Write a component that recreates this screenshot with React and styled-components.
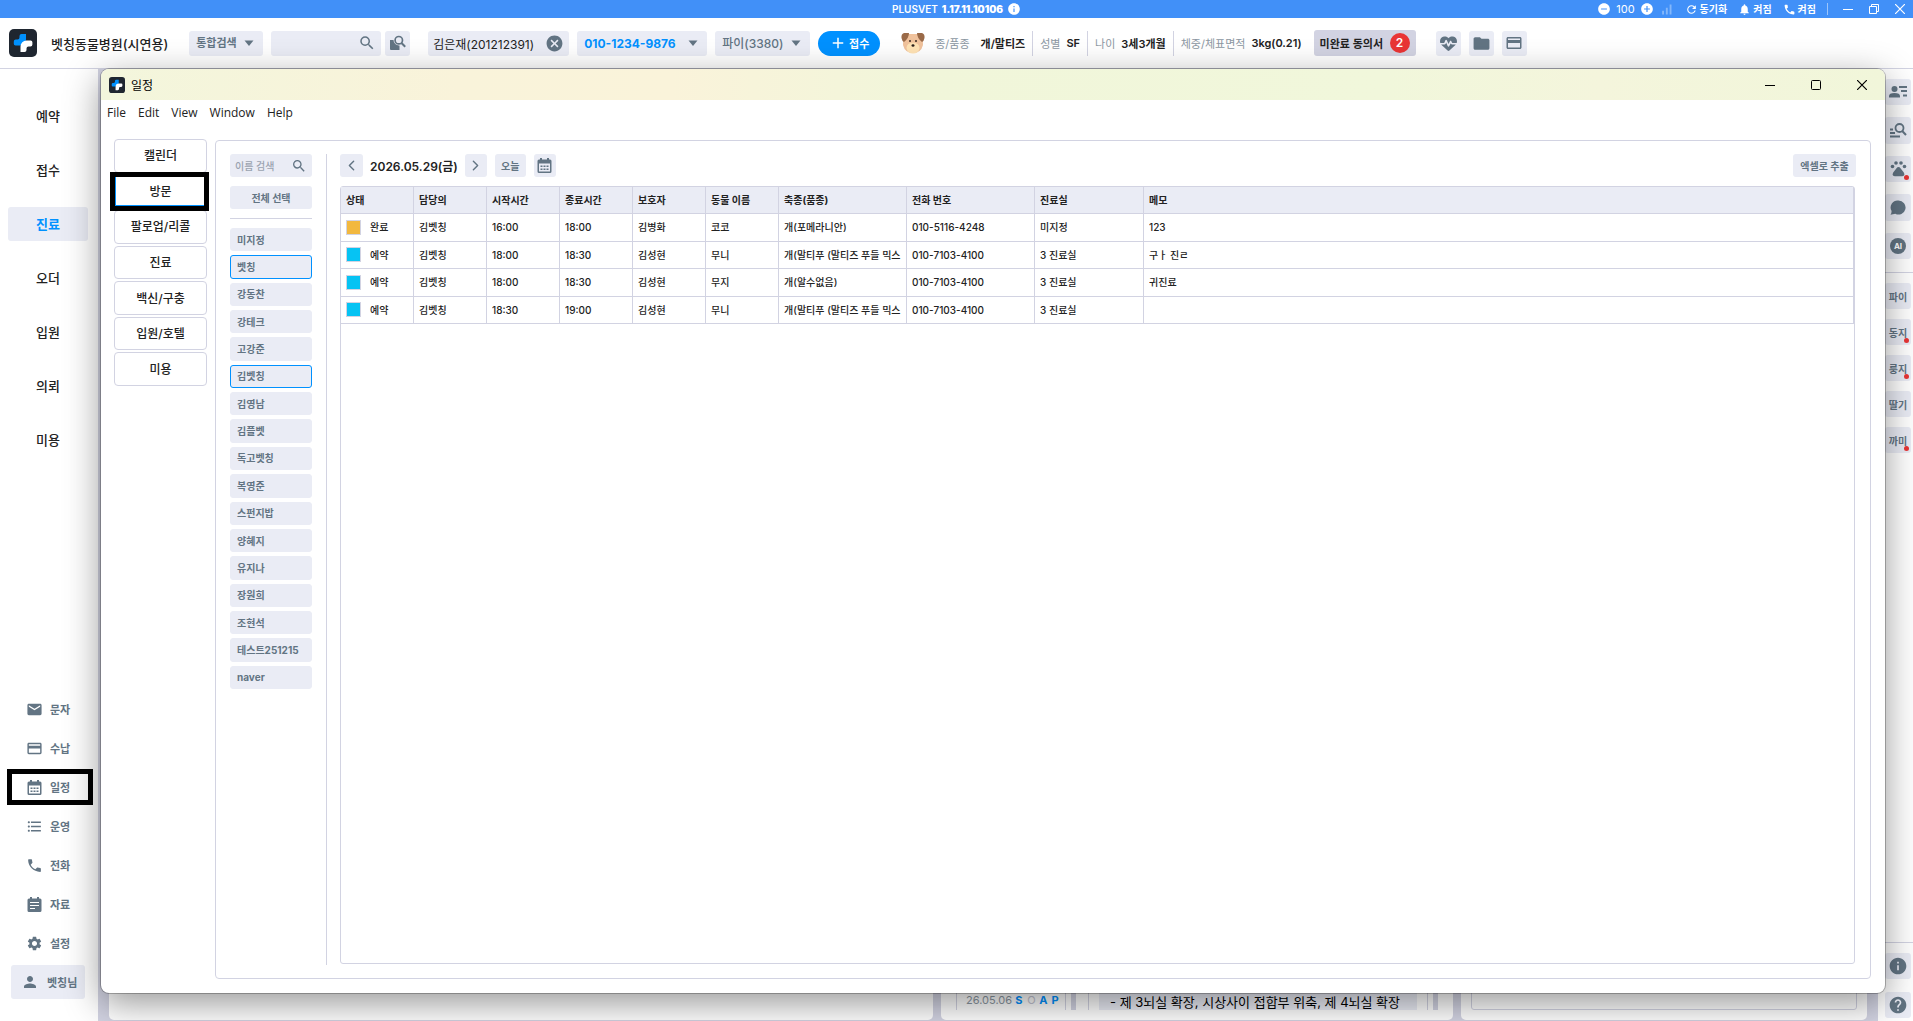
import { useState } from 'react'
import styled, { createGlobalStyle } from 'styled-components'
import {
  MdAdd, MdAddCircle, MdCancel, MdCreditCard, MdEmail, MdFolder, MdFormatListBulleted,
  MdHelp, MdInfo, MdNotifications, MdPerson, MdPhone, MdRefresh, MdRemoveCircle,
  MdSearch, MdSettings, MdSignalCellularAlt,
} from 'react-icons/md'
import { FaHeartPulse } from 'react-icons/fa6'
import { ChevronLeft, ChevronRight } from 'lucide-react'

const Calendar = () => (
  <svg width="17" height="17" viewBox="0 0 17 17" aria-hidden="true">
    <path d="M4 1h2v1.500h5V1h2v1.500h1a1.500 1.500 0 0 1 1.500 1.500v10.500A1.500 1.500 0 0 1 14 16H3a1.500 1.500 0 0 1-1.500-1.500V4A1.500 1.500 0 0 1 3 2.500h1zM3 6.500v8h11v-8z" fill="#627483" fillRule="evenodd" />
    <path d="M4.500 8.500h2v1.500h-2zM7.500 8.500h2v1.500h-2zM10.500 8.500h2v1.500h-2zM4.500 11.500h2V13h-2zM7.500 11.500h2V13h-2zM10.500 11.500h2V13h-2z" fill="#627483" />
  </svg>
)

const NotePad = () => (
  <svg width="17" height="17" viewBox="0 0 17 17" aria-hidden="true">
    <path d="M4 1h2v1.500h5V1h2v1.500h1a1.500 1.500 0 0 1 1.500 1.500v10.500A1.500 1.500 0 0 1 14 16H3a1.500 1.500 0 0 1-1.500-1.500V4A1.500 1.500 0 0 1 3 2.500h1z" fill="#627483" />
    <path d="M4 6.500h9M4 9.500h9M4 12.500h5" stroke="#fff" strokeWidth="1.200" />
  </svg>
)

const Paw = () => (
  <svg width="17" height="16" viewBox="0 0 17 16" fill="#627483" aria-hidden="true">
    <circle cx="2.500" cy="5.500" r="1.800" />
    <circle cx="6" cy="2" r="1.800" />
    <circle cx="11" cy="2" r="1.800" />
    <circle cx="14.500" cy="5.500" r="1.800" />
    <path d="M8.500 6q1.200 0 2 1.200l3.300 4.300q1.200 1.800.200 3-.600.800-2 .800H5q-1.400 0-2-.800-1-1.200.200-3l3.300-4.300Q7.300 6 8.500 6z" />
  </svg>
)

const mainMenu = ['예약', '접수', '진료', '오더', '입원', '의뢰', '미용']

const subMenu = [
  { label: '문자', icon: MdEmail },
  { label: '수납', icon: MdCreditCard },
  { label: '일정', icon: Calendar, marked: true },
  { label: '운영', icon: MdFormatListBulleted },
  { label: '전화', icon: MdPhone },
  { label: '자료', icon: NotePad },
  { label: '설정', icon: MdSettings },
]

const tabs = ['캘린더', '방문', '팔로업/리콜', '진료', '백신/구충', '입원/호텔', '미용']

const staff = [
  '미지정', '벳칭', '강동찬', '강테크', '고강준', '김벳칭', '김영남', '김플벳', '독고벳칭',
  '복영준', '스펀지밥', '양혜지', '유지나', '장원희', '조현석', '테스트251215', 'naver',
]

const columns = ['상태', '담당의', '시작시간', '종료시간', '보호자', '동물 이름', '축종(품종)', '전화 번호', '진료실', '메모']

const rows = [
  ['완료', '김벳칭', '16:00', '18:00', '김병화', '코코', '개(포메라니안)', '010-5116-4248', '미지정', '123'],
  ['예약', '김벳칭', '18:00', '18:30', '김성현', '무니', '개(말티푸 (말티즈 푸들 믹스', '010-7103-4100', '3 진료실', '구ㅏ 진ㄹ'],
  ['예약', '김벳칭', '18:00', '18:30', '김성현', '무지', '개(알수없음)', '010-7103-4100', '3 진료실', '귀진료'],
  ['예약', '김벳칭', '18:30', '19:00', '김성현', '무니', '개(말티푸 (말티즈 푸들 믹스', '010-7103-4100', '3 진료실', ''],
]

const pets = [
  { name: '파이' },
  { name: '동지', dot: true },
  { name: '룽지', dot: true },
  { name: '딸기' },
  { name: '까미', dot: true },
]

const Logo = ({ size }) => (
  <svg width={size} height={size} viewBox="0 0 28 28" aria-hidden="true">
    <rect width="28" height="28" rx="5" fill="#1f2630" />
    <path d="M10.500 7a2 2 0 0 1 2-2H17v5.500a6 6 0 0 1-6 6H6.500a1.700 1.700 0 0 1-1.700-1.700v-2.300a2 2 0 0 1 2-2h1.700a2 2 0 0 0 2-2z" fill="#0091ff" />
    <path d="M17.500 21a2 2 0 0 1-2 2H11.500v-5.500a6 6 0 0 1 6-6h4.200a1.700 1.700 0 0 1 1.700 1.700v2.300a2 2 0 0 1-2 2h-1.900a2 2 0 0 0-2 2z" fill="#fff" />
  </svg>
)

const Dog = () => (
  <svg width="24" height="22" viewBox="0 0 24 22" aria-hidden="true">
    <path d="M5 2h14q3 4 3 11-2 8-10 8T2 13Q2 6 5 2z" fill="#f0c29c" />
    <ellipse cx="12" cy="16" rx="6.500" ry="5.500" fill="#ffe3b5" />
    <path d="M3 1h5q0 5-5 9-2-1-2.500-4Q0 2 3 1zM21 1h-5q0 5 5 9 2-1 2.500-4Q24 2 21 1z" fill="#9a6a48" />
    <circle cx="9" cy="9" r="1" fill="#3b2b23" />
    <circle cx="15" cy="9" r="1" fill="#3b2b23" />
    <ellipse cx="12" cy="13.500" rx="1.500" ry="1.200" fill="#2c211c" />
  </svg>
)

const DocSearch = () => (
  <svg width="17" height="16" viewBox="0 0 17 16" aria-hidden="true">
    <path d="M1 5h3.500a5.500 5.500 0 0 0 6 5.500V15H2a1 1 0 0 1-1-1z" fill="#627483" />
    <circle cx="9.800" cy="5.200" r="3.700" fill="none" stroke="#627483" strokeWidth="1.700" />
    <path d="M12.500 8l3.700 3.800" stroke="#627483" strokeWidth="2" />
  </svg>
)

const PersonList = () => (
  <svg width="20" height="14" viewBox="0 0 20 14" fill="#627483" aria-hidden="true">
    <circle cx="6.500" cy="4" r="3" />
    <path d="M1 12.500V11q0-3 5.500-3T12 11v1.500zM11 1h8v2h-8zM13 5h6v2h-6zM15 9.500h4v2h-4z" />
  </svg>
)

const ListSearch = () => (
  <svg width="18" height="15" viewBox="0 0 18 15" aria-hidden="true">
    <path d="M1 5.500h3v2H1zM1 9h5v2H1zM1 12.500h10v2H1z" fill="#627483" />
    <circle cx="10.500" cy="5" r="4" fill="none" stroke="#627483" strokeWidth="1.800" />
    <path d="M13.200 8l3.800 4" stroke="#627483" strokeWidth="2" />
  </svg>
)

const Bubble = () => (
  <svg width="16" height="15" viewBox="0 0 16 15" aria-hidden="true">
    <path d="M8.500 0.500a7 7 0 1 1-3.200 13.200L0.500 14.800q1.300-2 1-4A7 7 0 0 1 8.500.5z" fill="#627483" />
  </svg>
)

const Caret = () => (
  <svg width="10" height="7" viewBox="0 0 10 7" aria-hidden="true">
    <path d="M.5.500h9L5 6z" fill="#627483" />
  </svg>
)

const WinMin = () => <svg width="10" height="10" aria-hidden="true"><path d="M0 5.500h10" stroke="currentColor" /></svg>
const WinMax = () => <svg width="10" height="10" aria-hidden="true"><rect x=".5" y=".5" width="9" height="9" rx="1" fill="none" stroke="currentColor" /></svg>
const WinClose = () => <svg width="10" height="10" aria-hidden="true"><path d="M0 0l10 10M10 0L0 10" stroke="currentColor" strokeWidth="1.200" /></svg>
const WinRestore = () => (
  <svg width="10" height="10" aria-hidden="true">
    <path d="M.5 2.500h7v7h-7zM2.500 2.500v-2h7v7h-2" fill="none" stroke="currentColor" />
  </svg>
)

const App = () => {
  const [tab, setTab] = useState('방문')
  const [picked, setPicked] = useState(['벳칭', '김벳칭'])

  const toggle = (name) => {
    setPicked(picked.includes(name) ? picked.filter((n) => n !== name) : [...picked, name])
  }

  return (
    <>
      <GlobalStyle />
      <Page>
        <TitleBar>
          <AppTitle>PLUSVET <b>1.17.11.10106</b><MdInfo size={14} /></AppTitle>
          <TitleTools>
            <BarButton aria-label="축소"><MdRemoveCircle size={14} /></BarButton>
            <Zoom>100</Zoom>
            <BarButton aria-label="확대"><MdAddCircle size={14} /></BarButton>
            <Signal size={15} />
            <BarButton $wide><MdRefresh size={13} />동기화</BarButton>
            <BarButton $wide><MdNotifications size={13} />켜짐</BarButton>
            <BarButton $wide><MdPhone size={13} />켜짐</BarButton>
            <BarLine />
            <BarWindow aria-label="최소화"><WinMin /></BarWindow>
            <BarWindow aria-label="이전 크기"><WinRestore /></BarWindow>
            <BarWindow aria-label="닫기"><WinClose /></BarWindow>
          </TitleTools>
        </TitleBar>

        <Header>
          <Logo size={28} />
          <Hospital>벳칭동물병원(시연용)</Hospital>
          <Pick $width={74} $size={11} $bold>
            <select aria-label="검색 구분"><option>통합검색</option></select>
            <Caret />
          </Pick>
          <SearchBox>
            <input aria-label="통합 검색" />
            <MdSearch size={18} />
          </SearchBox>
          <IconButton aria-label="상세 검색" $tight><DocSearch /></IconButton>
          <Client>김은재(201212391)<button aria-label="지우기"><MdCancel size={19} /></button></Client>
          <Pick $width={130} $size={12} $bold $blue>
            <select aria-label="전화 번호"><option>010-1234-9876</option></select>
            <Caret />
          </Pick>
          <Pick $width={95} $size={12}>
            <select aria-label="동물"><option>파이(3380)</option></select>
            <Caret />
          </Pick>
          <Receive><MdAdd size={18} />접수</Receive>
          <PetInfo>
            <Dog />
            <Fact $first><dt>종/품종</dt><dd>개/말티즈</dd></Fact>
            <Fact><dt>성별</dt><dd>SF</dd></Fact>
            <Fact><dt>나이</dt><dd>3세3개월</dd></Fact>
            <Fact $last><dt>체중/체표면적</dt><dd>3kg(0.21)</dd></Fact>
          </PetInfo>
          <Consent>미완료 동의서<span>2</span></Consent>
          <HeaderIcons>
            <IconButton aria-label="건강"><FaHeartPulse size={17} /></IconButton>
            <IconButton aria-label="폴더"><MdFolder size={19} /></IconButton>
            <IconButton aria-label="결제"><MdCreditCard size={18} /></IconButton>
          </HeaderIcons>
        </Header>

        <Body>
          <Side>
            <MainMenu>
              {mainMenu.map((m) => <MainItem key={m} href="#" $on={m === '진료'}>{m}</MainItem>)}
            </MainMenu>
            <SubMenu>
              {subMenu.map(({ label, icon: Icon, marked }) => (
                <SubItem key={label} href="#" $marked={marked}><Icon size={17} />{label}</SubItem>
              ))}
            </SubMenu>
            <User><MdPerson size={18} />벳칭님</User>
          </Side>

          <Work>
            <Card />
            <Card>
              <Dates>26.05.06 <b>S</b> <i>O</i> <b>A</b> <b>P</b></Dates>
              <Scroll />
              <Note><p>- 제 3뇌실 확장, 시상사이 접합부 위축, 제 4뇌실 확장</p></Note>
              <Scroll />
            </Card>
            <Card $pad={10}><Empty /></Card>
          </Work>

          <Rail>
            <RailTools>
              <RailButton aria-label="고객 목록"><PersonList /></RailButton>
              <RailButton aria-label="기록 검색"><ListSearch /></RailButton>
              <RailButton aria-label="동물" $dot><Paw /></RailButton>
              <RailButton aria-label="대화"><Bubble /></RailButton>
              <RailButton aria-label="AI"><Ai>AI</Ai></RailButton>
            </RailTools>
            <RailGroup $gap={10}>
              {pets.map((p) => <RailButton key={p.name} $dot={p.dot}>{p.name}</RailButton>)}
            </RailGroup>
            <RailGroup $gap={13} $end>
              <RailButton aria-label="정보"><MdInfo size={20} /></RailButton>
              <RailButton aria-label="도움말"><MdHelp size={20} /></RailButton>
            </RailGroup>
          </Rail>
        </Body>

        <Window>
          <WindowBar>
            <Logo size={16} />
            <WindowTitle>일정</WindowTitle>
            <WindowButton aria-label="최소화"><WinMin /></WindowButton>
            <WindowButton aria-label="최대화"><WinMax /></WindowButton>
            <WindowButton aria-label="닫기"><WinClose /></WindowButton>
          </WindowBar>
          <MenuBar>
            {['File', 'Edit', 'View', 'Window', 'Help'].map((m) => <button key={m}>{m}</button>)}
          </MenuBar>
          <Content>
            <Tabs>
              {tabs.map((t) => <Tab key={t} $on={t === tab} onClick={() => setTab(t)}>{t}</Tab>)}
            </Tabs>
            <Panel>
              <Filter>
                <NameSearch>
                  <input placeholder="이름 검색" aria-label="이름 검색" />
                  <MdSearch size={16} />
                </NameSearch>
                <SmallButton>전체 선택</SmallButton>
                <Staff>
                  {staff.map((s) => (
                    <StaffButton key={s} $on={picked.includes(s)} onClick={() => toggle(s)}>{s}</StaffButton>
                  ))}
                </Staff>
              </Filter>
              <Main>
                <Toolbar>
                  <SmallButton $width={23} aria-label="이전 날"><ChevronLeft size={17} /></SmallButton>
                  <Today>2026.05.29(금)</Today>
                  <SmallButton $width={22} aria-label="다음 날"><ChevronRight size={17} /></SmallButton>
                  <SmallButton $width={31}>오늘</SmallButton>
                  <SmallButton $width={22} aria-label="날짜 선택"><Calendar /></SmallButton>
                  <Export $width={63}>엑셀로 추출</Export>
                </Toolbar>
                <TableBox>
                  <Table>
                    <colgroup>
                      {[73, 73, 73, 73, 73, 73, 128, 128, 109].map((w, i) => <Col key={i} $width={w} />)}
                      <col />
                    </colgroup>
                    <thead>
                      <tr>{columns.map((c) => <th key={c}>{c}</th>)}</tr>
                    </thead>
                    <tbody>
                      {rows.map((row, i) => (
                        <tr key={i}>
                          {row.map((cell, j) => (
                            <td key={j}>
                              {j === 0 ? <Status $done={cell === '완료'}>{cell}</Status> : <Clip>{cell}</Clip>}
                            </td>
                          ))}
                        </tr>
                      ))}
                    </tbody>
                  </Table>
                </TableBox>
              </Main>
            </Panel>
          </Content>
        </Window>
      </Page>
    </>
  )
}

export default App

const GlobalStyle = createGlobalStyle`
  * {
    box-sizing: border-box;
  }
  body {
    margin: 0;
    font-family: Inter, "Noto Sans CJK KR", sans-serif;
    color: #222;
  }
  button, input, select {
    font: inherit;
    color: inherit;
    border: none;
    padding: 0;
    background: none;
  }
  a {
    color: inherit;
    text-decoration: none;
  }
  svg {
    flex: none;
  }
`

const Page = styled.div`
  position: relative;
  display: flex;
  flex-direction: column;
  min-height: 100vh;
  overflow: hidden;
`

const TitleBar = styled.div`
  display: grid;
  grid-template-columns: 1fr auto 1fr;
  align-items: center;
  height: 18px;
  color: #fff;
  background: #4190f8;
  font-size: 10px;
  line-height: 16px;
`

const AppTitle = styled.div`
  grid-column: 2;
  display: flex;
  align-items: center;
  gap: 4px;
  font-weight: 600;
`

const TitleTools = styled.div`
  display: flex;
  align-items: center;
  justify-content: flex-end;
  gap: 5px;
  padding-right: 8px;
`

const BarButton = styled.button`
  display: flex;
  align-items: center;
  gap: 2px;
  font-weight: 700;
  margin-right: ${(props) => (props.$wide ? '6px' : '0')};
`

const Zoom = styled.span`
  font-size: 11px;
`

const Signal = styled(MdSignalCellularAlt)`
  opacity: 0.35;
  margin-right: 6px;
`

const BarLine = styled.i`
  width: 1px;
  height: 12px;
  margin-right: 10px;
  background: #9cc5fb;
`

const BarWindow = styled(BarButton)`
  margin-left: 11px;

  ${BarLine} + & {
    margin-left: 0;
  }
`

const Header = styled.header`
  display: flex;
  align-items: center;
  height: 51px;
  padding-left: 9px;
  background: #fff;
  border-bottom: 1px solid #d2d3e2;
`

const Hospital = styled.h1`
  margin: 0 21px 0 14px;
  font-size: 13px;
  font-weight: 500;
  white-space: nowrap;
`

const Field = styled.div`
  display: flex;
  align-items: center;
  flex: none;
  height: 25px;
  border-radius: 3px;
  background: #eaecf5;
  color: #627483;
`

const Pick = styled(Field)`
  width: ${(props) => props.$width}px;
  margin-right: 8px;
  padding: 0 9px 0 7px;
  font-size: ${(props) => props.$size}px;

  select {
    flex: 1;
    min-width: 0;
    appearance: none;
    outline: none;
    color: ${(props) => (props.$blue ? '#0091ff' : '#627483')};
    font-weight: ${(props) => (props.$bold ? 700 : 500)};
  }
`

const SearchBox = styled(Field)`
  width: 110px;
  padding-right: 5px;

  input {
    flex: 1;
    min-width: 0;
    outline: none;
  }
`

const IconButton = styled.button`
  display: flex;
  align-items: center;
  justify-content: center;
  flex: none;
  width: 25px;
  height: 25px;
  margin-left: ${(props) => (props.$tight ? '4px' : '0')};
  border-radius: 3px;
  color: #627483;
  background: #eaecf5;
`

const Client = styled(Field)`
  justify-content: space-between;
  width: 141px;
  margin: 0 8px 0 18px;
  padding: 0 5px;
  color: #222;
  font-size: 12px;

  button {
    display: flex;
    color: #627483;
  }
`

const Receive = styled.button`
  display: flex;
  align-items: center;
  justify-content: center;
  flex: none;
  gap: 2px;
  width: 62px;
  height: 25px;
  border-radius: 13px;
  color: #fff;
  background: #0091ff;
  font-size: 11px;
  font-weight: 700;
`

const PetInfo = styled.dl`
  display: flex;
  align-items: center;
  flex: none;
  margin: 0 12px 0 21px;
`

const Fact = styled.div`
  display: flex;
  align-items: center;
  gap: ${(props) => (props.$first ? '11px' : '6px')};
  height: 25px;
  padding: 0 ${(props) => (props.$last ? '0' : '7px')} 0 ${(props) => (props.$first ? '10px' : '7px')};
  border-right: ${(props) => (props.$last ? 'none' : '1px solid #d2d3e2')};
  font-size: 11px;
  white-space: nowrap;

  dt {
    color: #8c97a2;
  }
  dd {
    margin: 0;
    font-weight: 600;
  }
`

const Consent = styled.button`
  display: flex;
  align-items: center;
  justify-content: space-between;
  flex: none;
  width: 102px;
  height: 26px;
  padding: 0 6px;
  border-radius: 3px;
  background: #d2d3e2;
  font-size: 11px;
  font-weight: 600;

  span {
    width: 20px;
    border-radius: 10px;
    color: #fff;
    background: #e93535;
    font-size: 12px;
    line-height: 20px;
  }
`

const HeaderIcons = styled.div`
  display: flex;
  gap: 8px;
  margin-left: 20px;
`

const Body = styled.div`
  display: flex;
  flex: 1;
`

const Side = styled.aside`
  display: flex;
  flex-direction: column;
  width: 98px;
  padding: 30px 10px 22px 8px;
  background: #fff;
`

const MainMenu = styled.nav`
  display: flex;
  flex-direction: column;
  gap: 20px;
`

const MainItem = styled.a`
  height: 34px;
  border-radius: 3px;
  line-height: 34px;
  text-align: center;
  font-size: 13px;
  font-weight: ${(props) => (props.$on ? 700 : 500)};
  color: ${(props) => (props.$on ? '#0091ff' : '#222')};
  background: ${(props) => (props.$on ? '#eaecf5' : 'none')};
`

const SubMenu = styled.nav`
  display: flex;
  flex-direction: column;
  gap: 13px;
  margin: auto 0 9px 4px;
`

const SubItem = styled.a`
  display: flex;
  align-items: center;
  gap: 7px;
  height: 26px;
  padding-left: 14px;
  outline: ${(props) => (props.$marked ? '5px solid #000' : 'none')};
  color: #627483;
  font-size: 11px;
  font-weight: 700;
`

const User = styled.button`
  display: flex;
  align-items: center;
  gap: 8px;
  width: 74px;
  height: 34px;
  margin-left: 3px;
  padding-left: 10px;
  border-radius: 3px;
  color: #627483;
  background: #eaecf5;
  font-size: 11px;
  font-weight: 700;
`

const Work = styled.main`
  display: grid;
  grid-template-columns: 824fr 512fr 406fr;
  flex: 1;
  gap: 8px;
  min-width: 0;
  padding: 8px 11px 1px;
  background: #d2d3e2;
`

const Card = styled.section`
  display: flex;
  align-items: flex-end;
  min-width: 0;
  padding: 10px ${(props) => props.$pad || 15}px;
  border-radius: 5px;
  background: #fff;
`

const Dates = styled.div`
  width: 110px;
  flex: none;
  padding: 0 0 2px 9px;
  border: solid #d2d3e2;
  border-width: 0 1px;
  color: #8c97a2;
  font-size: 11px;
  line-height: 16px;
  white-space: nowrap;

  b, i {
    display: inline-block;
    width: 9px;
    color: #0091ff;
  }
  i {
    font-style: normal;
    color: #c3c5d3;
  }
`

const Scroll = styled.div`
  flex: none;
  width: 5px;
  height: 60px;
  margin-left: 5px;
  background: #d2d3e2;
`

const Note = styled.div`
  flex: 1;
  min-width: 0;
  margin-left: 12px;
  padding: 0 10px;
  border: solid #d2d3e2;
  border-width: 0 1px;

  p {
    margin: 0;
    padding: 16px 11px 0;
    background: #eaecf5;
    color: #000;
    font-size: 13px;
    line-height: 16px;
    white-space: nowrap;
  }
`

const Empty = styled.div`
  flex: 1;
  height: 60px;
  border: 1px solid #d2d3e2;
  border-radius: 3px;
`

const Rail = styled.aside`
  display: flex;
  flex-direction: column;
  width: 35px;
  padding: 10px 0 3px;
  background: #fff;
`

const RailTools = styled.div`
  display: grid;
  grid-auto-rows: 1fr;
  gap: 12px;
  height: 193px;
  padding: 0 2px 13px 7px;
`

const RailGroup = styled.div`
  display: flex;
  flex-direction: column;
  gap: ${(props) => props.$gap}px;
  margin-top: ${(props) => (props.$end ? 'auto' : '0')};
  padding: 10px 2px 0 7px;
  border-top: 1px solid #d2d3e2;
`

const RailButton = styled.button`
  position: relative;
  display: flex;
  align-items: center;
  justify-content: center;
  min-height: 26px;
  border-radius: 3px;
  color: #627483;
  background: #eaecf5;
  font-size: 10px;
  font-weight: 700;
  white-space: nowrap;

  &::after {
    content: '';
    display: ${(props) => (props.$dot ? 'block' : 'none')};
    position: absolute;
    right: 2px;
    bottom: 2px;
    width: 5px;
    height: 5px;
    border-radius: 50%;
    background: #e93535;
  }
`

const Ai = styled.span`
  width: 16px;
  border-radius: 8px;
  color: #fff;
  background: #627483;
  font-size: 8px;
  line-height: 16px;
`

// 일정 창은 메인 화면 위에 떠 있다
const Window = styled.section`
  position: absolute;
  inset: 69px 28px 28px 101px;
  display: flex;
  flex-direction: column;
  overflow: hidden;
  border-radius: 8px;
  background: #fff;
  box-shadow: 0 0 0 1px rgba(0, 0, 0, 0.25), 0 10px 36px rgba(0, 0, 0, 0.42);
`

const WindowBar = styled.header`
  display: flex;
  align-items: center;
  flex: none;
  height: 31px;
  padding-left: 8px;
  background: linear-gradient(90deg, #f3f6dc 0%, #f9f3da 20%, #faf3da 32%, #f1f6da 46%, #f1f7db 72%, #f4f5dc 84%, #f1f6da 100%);
  color: #000;
`

const WindowTitle = styled.h2`
  flex: 1;
  margin: 0 6px;
  font-size: 12px;
  font-weight: 400;
`

const WindowButton = styled.button`
  display: flex;
  align-items: center;
  justify-content: center;
  width: 46px;
  height: 30px;
`

const MenuBar = styled.div`
  display: flex;
  gap: 12px;
  flex: none;
  padding: 5px 6px 3px;
  color: #222;
  font-family: "Open Sans", "Noto Sans", sans-serif;
  font-size: 12px;
  line-height: 16px;
`

const Content = styled.div`
  display: flex;
  flex: 1;
  gap: 8px;
  min-height: 0;
  padding: 16px 14px 14px 13px;
`

const Tabs = styled.nav`
  display: grid;
  grid-auto-rows: 1fr;
  gap: 2px;
  flex: none;
  width: 93px;
  height: 247px;
  margin-top: -1px;
`

const Tab = styled.button`
  position: relative;
  padding-bottom: 2px;
  border: 1px solid #d2d3e2;
  border-radius: 4px;
  background: #fff;
  font-size: 12px;
  font-weight: 500;

  &::after {
    content: '';
    display: ${(props) => (props.$on ? 'block' : 'none')};
    position: absolute;
    z-index: 1;
    inset: -4px -3px -4px -5px;
    border: 5px solid #000;
    box-shadow: inset 1px -1px 0 #0091ff;
  }
`

const Panel = styled.div`
  display: flex;
  flex: 1;
  min-width: 0;
  padding: 13px 14px;
  border: 1px solid #d2d3e2;
  border-radius: 4px;
`

const Filter = styled.div`
  display: flex;
  flex-direction: column;
  gap: 9px;
  flex: none;
  width: 97px;
  padding-right: 14px;
  border-right: 1px solid #d2d3e2;
`

const NameSearch = styled(Field)`
  height: 23px;
  padding: 0 5px;
  font-size: 10px;

  input {
    flex: 1;
    min-width: 0;
    outline: none;
  }
  input::placeholder {
    color: #9aa3b0;
    font-weight: 500;
  }
`

const SmallButton = styled.button`
  display: flex;
  align-items: center;
  justify-content: center;
  flex: none;
  width: ${(props) => (props.$width ? `${props.$width}px` : 'auto')};
  height: 23px;
  border-radius: 3px;
  color: #627483;
  background: #eaecf5;
  font-size: 10px;
  font-weight: 700;
`

const Staff = styled.div`
  display: grid;
  grid-auto-rows: 1fr;
  gap: 4px;
  height: 471px;
  padding-top: 9px;
  border-top: 1px solid #d2d3e2;
`

const StaffButton = styled.button`
  padding: 0 6px;
  border: 1px solid ${(props) => (props.$on ? '#0091ff' : '#eaecf5')};
  border-radius: 3px;
  color: #627483;
  background: #eaecf5;
  text-align: left;
  font-size: 10px;
  font-weight: 700;
  line-height: 16px;
`

const Main = styled.div`
  display: flex;
  flex-direction: column;
  flex: 1;
  gap: 9px;
  min-width: 0;
  padding: 0 0 1px 13px;
`

const Toolbar = styled.div`
  display: flex;
  align-items: center;
  gap: 8px;
`

const Today = styled.strong`
  margin: 0 -1px;
  font-size: 12px;
  font-weight: 600;
  white-space: nowrap;
`

const Export = styled(SmallButton)`
  margin-left: auto;
`

const TableBox = styled.div`
  flex: 1;
  margin-right: 1px;
  border: 1px solid #d2d3e2;
  border-radius: 3px;
`

const Table = styled.table`
  width: 100%;
  height: 137px;
  table-layout: fixed;
  border-collapse: separate;
  border-spacing: 0;
  font-size: 10px;
  line-height: 16px;
  text-align: left;

  th, td {
    padding: 0 5px;
    border: solid #d2d3e2;
    border-width: 0 1px 1px 0;
    font-weight: 500;
  }
  th {
    height: 27px;
    background: #eaecf5;
    font-weight: 700;
  }
`

const Col = styled.col`
  width: ${(props) => props.$width}px;
`

const Clip = styled.div`
  height: 16px;
  overflow: hidden;
  white-space: nowrap;
`

const Status = styled.div`
  display: flex;
  align-items: center;
  gap: 9px;

  &::before {
    content: '';
    width: 13px;
    height: 13px;
    border: 1px solid #d2d3e2;
    background: ${(props) => (props.$done ? '#f2b83f' : '#06c3f3')};
  }
`
